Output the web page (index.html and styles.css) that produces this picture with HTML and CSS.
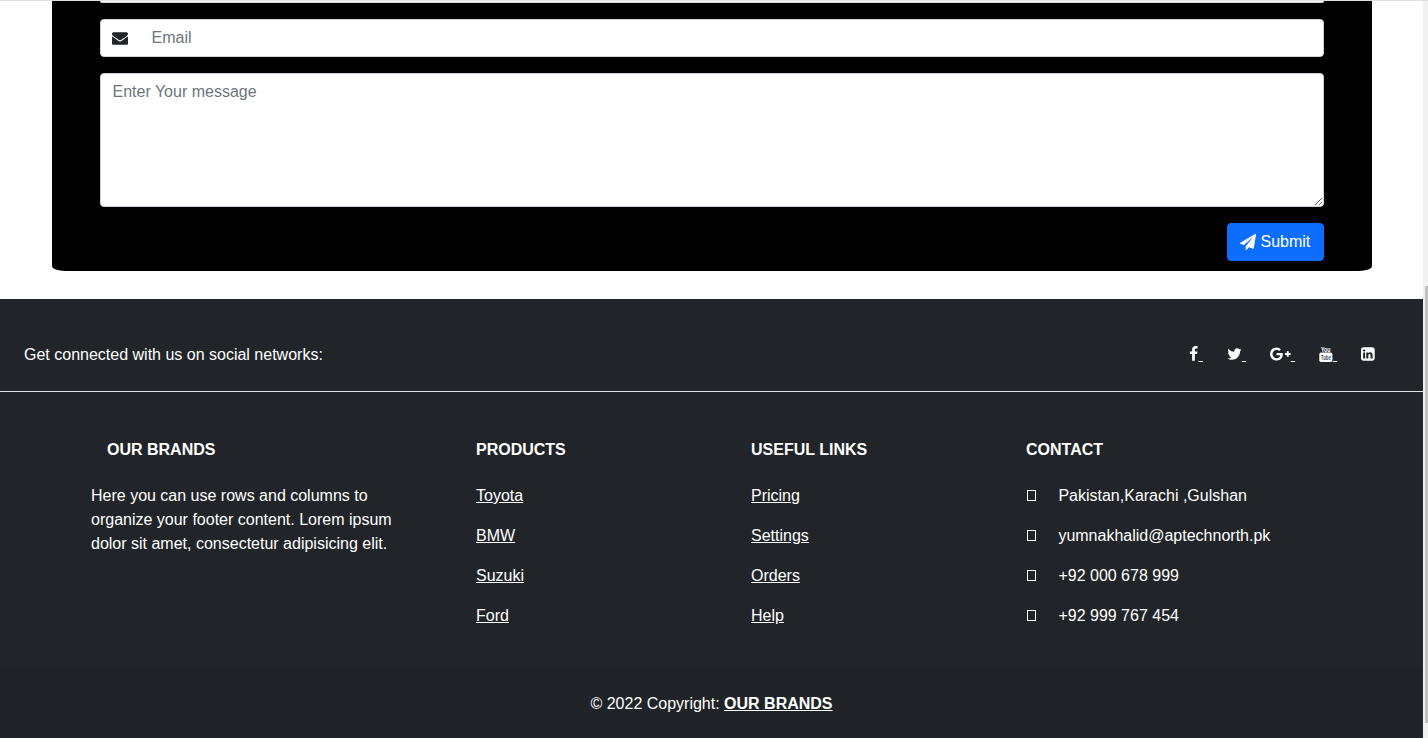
FILE: index.html
```html
<!DOCTYPE html>
<html lang="en">
<head>
<meta charset="utf-8">
<title>Our Brands</title>
<link rel="stylesheet" href="styles.css">
</head>
<body>
<div class="window">
  <div class="page">
    <form class="contact-form">
      <div class="field field-clipped"></div>
      <label class="field field-email">
        <svg class="icon" width="16" height="16" viewBox="0 0 1792 1792"><path d="M1792 710v794q0 66-47 113t-113 47h-1472q-66 0-113-47t-47-113v-794q44 49 101 87 362 246 497 345 57 42 92.500 65.500t94.500 48 110 24.500h2q51 0 110-24.500t94.500-48 92.500-65.500q170-123 498-345 57-39 100-87zm0-294q0 79-49 151t-122 123q-376 261-468 325-10 7-42.500 31t-54 38.500-52 32.500-57.500 27-50 9h-2q-23 0-50-9t-57.500-27-52-32.500-54-38.500-42.500-31q-91-64-262-182.500t-205-142.500q-62-42-117-115.500t-55-136.500q0-78 41.500-130t118.500-52h1472q65 0 112.500 47t47.500 113z"/></svg>
        <input class="email" type="email" placeholder="Email">
      </label>
      <textarea class="field message" placeholder="Enter Your message"></textarea>
      <button class="submit" type="button"><svg class="icon" width="16" height="16" viewBox="0 0 1792 1792"><path d="M1764 11q33 24 27 64l-256 1536q-5 29-32 45-14 8-31 8-11 0-24-5l-453-185-242 295q-18 23-49 23-13 0-22-4-19-7-30.500-23.500t-11.500-36.500v-349l864-1059-1069 925-395-162q-37-14-40-55-2-40 32-59l1664-960q15-9 32-9 20 0 36 11z"/></svg><span>Submit</span></button>
    </form>
    <footer class="footer">
      <section class="social">
        <span>Get connected with us on social networks:</span>
        <nav class="social-links">
          <a class="social-link"><svg class="icon" width="9.14" height="16" viewBox="384 0 1024 1792"><path d="M1343 12v264h-157q-86 0-116 36t-30 108v189h293l-39 296h-254v759h-306v-759h-255v-296h255v-218q0-186 104-288.500t277-102.500q147 0 228 12z"/></svg>&nbsp;</a>
          <a class="social-link"><svg class="icon" width="14.86" height="16" viewBox="64 0 1664 1792"><path d="M1684 408q-67 98-162 167 1 14 1 42 0 130-38 259.500t-115.500 248.500-184.500 210.500-258 146-323 54.500q-271 0-496-145 35 4 78 4 225 0 401-138-105-2-188-64.500t-114-159.500q33 5 61 5 43 0 85-11-112-23-185.500-111.500t-73.500-205.500v-4q68 38 146 41-66-44-105-115t-39-154q0-88 44-163 121 149 294.500 238.500t371.500 99.500q-8-38-8-74 0-134 94.500-228.500t228.500-94.500q140 0 236 102 109-21 205-78-37 115-142 178 93-10 186-50z"/></svg>&nbsp;</a>
          <a class="social-link"><svg class="icon" width="20.57" height="16" viewBox="0 0 2304 1792"><path d="M1437 913q0 208-87 370.500t-248 254-369 91.500q-149 0-285-58t-234-156-156-234-58-285 58-285 156-234 234-156 285-58q286 0 491 192l-199 191q-117-113-292-113-123 0-227.500 62t-165.500 168.500-61 232.500 61 232.500 165.500 168.500 227.500 62q83 0 152.500-23t114.500-57.500 78.500-78.500 49-83 21.500-74h-416v-252h692q12 63 12 122zm867-122v210h-209v209h-210v-209h-209v-210h209v-209h210v209h209z"/></svg>&nbsp;</a>
          <a class="social-link"><svg class="icon" width="13.71" height="16" viewBox="0 0 13.71 16"><rect x="0.300" y="6.600" width="13.100" height="9.400" rx="1.800"/><text class="yt-you" x="2" y="5.800" textLength="9.500" lengthAdjust="spacingAndGlyphs">You</text><text class="yt-tube" x="1.800" y="14.300" textLength="10.200" lengthAdjust="spacingAndGlyphs">Tube</text></svg>&nbsp;</a>
          <a class="social-link"><svg class="icon" width="13.71" height="16" viewBox="128 0 1536 1792"><path d="M365 1414h231v-694h-231v694zm246-908q-1-52-36-86t-93-34-94.500 34-36.500 86q0 51 35.500 85.500t92.500 34.500h1q59 0 95-34.500t36-85.500zm585 908h231v-398q0-154-73-233t-193-79q-136 0-209 117h2v-101h-231q3 66 0 694h231v-388q0-38 7-56 15-35 45-59.500t74-24.500q116 0 116 157v371zm468-998v960q0 119-84.500 203.500t-203.500 84.500h-960q-119 0-203.500-84.500t-84.500-203.500v-960q0-119 84.500-203.500t203.500-84.500h960q119 0 203.500 84.500t84.500 203.500z"/></svg></a>
        </nav>
      </section>
      <section class="columns">
        <div class="column">
          <h6 class="heading heading-brand">OUR BRANDS</h6>
          <p class="item">Here you can use rows and columns to organize your footer content. Lorem ipsum dolor sit amet, consectetur adipisicing elit.</p>
        </div>
        <div class="column">
          <h6 class="heading">PRODUCTS</h6>
          <p class="item"><a class="link">Toyota</a></p>
          <p class="item"><a class="link">BMW</a></p>
          <p class="item"><a class="link">Suzuki</a></p>
          <p class="item"><a class="link">Ford</a></p>
        </div>
        <div class="column">
          <h6 class="heading">USEFUL LINKS</h6>
          <p class="item"><a class="link">Pricing</a></p>
          <p class="item"><a class="link">Settings</a></p>
          <p class="item"><a class="link">Orders</a></p>
          <p class="item"><a class="link">Help</a></p>
        </div>
        <div class="column">
          <h6 class="heading">CONTACT</h6>
          <p class="item contact"><i class="box"></i>Pakistan,Karachi ,Gulshan</p>
          <p class="item contact"><i class="box"></i>yumnakhalid@aptechnorth.pk</p>
          <p class="item contact"><i class="box"></i>+92 000 678 999</p>
          <p class="item contact"><i class="box"></i>+92 999 767 454</p>
        </div>
      </section>
      <div class="copyright">© 2022 Copyright: <a class="link link-bold">OUR BRANDS</a></div>
    </footer>
  </div>
  <div class="scrollbar"><div class="thumb"></div></div>
</div>
</body>
</html>
```
FILE: styles.css
```css
* { box-sizing: border-box; }
body {
  margin: 0;
  font: 16px/24px "Liberation Sans", Arial, sans-serif;
  color: #212529;
  background: #fff;
}
.window {
  display: flex;
  height: 738px;
  overflow: hidden;
  border-top: 1px solid #e0e0e0;
}
.page { width: 1423px; }
.icon { display: block; fill: currentColor; flex: none; overflow: visible; }

.contact-form {
  display: flex;
  flex-direction: column;
  gap: 16px;
  width: 1320px;
  height: 270px;
  margin: 0 auto 28px;
  padding: 0 48px;
  background: #000;
  border-radius: 0 0 13px 13px / 0 0 5px 5px;
}
.field {
  flex: none;
  width: 100%;
  background: #fff;
  border: 1px solid #ced4da;
  border-radius: 4px;
}
.field-clipped {
  height: 2px;
  border-top: 0;
  border-radius: 0 0 4px 4px;
}
.field-email {
  display: flex;
  align-items: center;
  gap: 23.5px;
  height: 38px;
  padding: 0 12px 0 11.5px;
}
.email {
  flex: 1;
  height: 24px;
  padding: 0;
  border: 0;
  outline: 0;
  font: inherit;
  background: none;
}
.email::placeholder, .message::placeholder { color: #6c757d; opacity: 1; }
.message {
  display: block;
  height: 134px;
  margin: 0;
  padding: 6px 12px;
  font: inherit;
  resize: vertical;
}
.submit {
  display: flex;
  flex: none;
  align-items: center;
  align-self: flex-end;
  gap: 5px;
  width: 97px;
  height: 38px;
  padding: 0 12px 1px;
  border: 1px solid #0d6efd;
  border-radius: 4px;
  background: #0d6efd;
  color: #fff;
  font: inherit;
}

.footer { background: #212529; color: #fff; }
.social {
  display: flex;
  justify-content: space-between;
  height: 93px;
  padding: 44px 48px 24px 24px;
  border-bottom: 1px solid #dee2e6;
}
.social-links { display: flex; gap: 24px; }
.social-link { display: flex; text-decoration: underline; }
.social-link .icon { margin-top: 3px; }
.yt-you { font: bold 7.5px "Liberation Sans", Arial, sans-serif; }
.yt-tube { font: bold 8px "Liberation Sans", Arial, sans-serif; fill: #50555a; }

.columns {
  display: grid;
  grid-template-columns: 330px 220px 220px 330px;
  justify-content: space-around;
  width: 1320px;
  margin: 0 auto;
  padding: 48px 0 24px;
}
.column { padding: 0 12px; }
.heading { margin: 0 0 24px; font-size: 16px; line-height: 20px; font-weight: bold; }
.heading-brand { padding-left: 16px; }
.item { margin: 0 0 16px; }
.link { color: #fff; text-decoration: underline; }
.link-bold { font-weight: bold; }
.contact { display: flex; align-items: center; }
.box { width: 9px; height: 11px; margin: -1px 22px 0 1.4px; border: 1px solid #fff; }
.copyright {
  height: 72px;
  padding: 24px;
  text-align: center;
  background: #202327;
}
.scrollbar {
  display: flex;
  justify-content: flex-end;
  width: 5px;
  padding-top: 285px;
  background: #f1f1f1;
}
.thumb { width: 3px; height: 437px; background: #c1c1c1; }
```
